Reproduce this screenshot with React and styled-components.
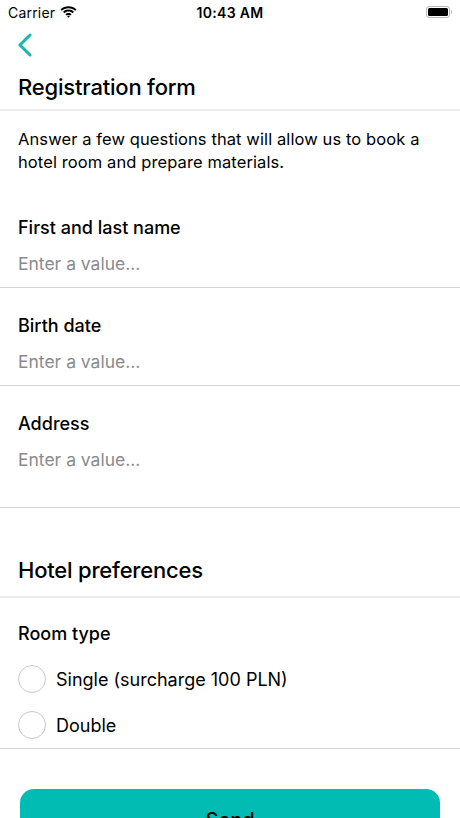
import React from 'react';
import styled, { createGlobalStyle } from 'styled-components';

const GlobalStyle = createGlobalStyle`
  body {
    margin: 0;
    background: #fff;
    font-family: Inter, "Noto Sans", "Liberation Sans", sans-serif;
    color: #000;
  }
`;

const Screen = styled.div`
  width: 460px;
  height: 818px;
  overflow: hidden;
  background: #fff;
`;

const StatusBar = styled.div`
  height: 24px;
  display: grid;
  grid-template-columns: 1fr auto 1fr;
  align-items: center;
  padding: 0 8px;
  font-size: 14px;
`;

const Carrier = styled.div`
  display: flex;
  align-items: center;
  gap: 5px;
  letter-spacing: 0.2px;
`;

const Time = styled.div`
  font-weight: 600;
  letter-spacing: 0.3px;
`;

const Battery = styled.div`
  justify-self: end;
  display: flex;
  align-items: center;
  gap: 1px;
`;

const BatteryBody = styled.div`
  width: 20px;
  height: 8px;
  border: 1.5px solid #b8b8b8;
  border-radius: 3px;
  padding: 1px;
  &::after {
    content: '';
    display: block;
    width: 100%;
    height: 100%;
    background: #000;
    border-radius: 1.5px;
  }
`;

const BatteryCap = styled.div`
  width: 1.5px;
  height: 4px;
  background: #b8b8b8;
  border-radius: 0 1px 1px 0;
`;

const NavBar = styled.div`
  height: 42px;
  display: flex;
  align-items: center;
  padding-left: 16px;
`;

const BackButton = styled.button`
  border: 0;
  background: none;
  padding: 0;
  display: flex;
  color: #13bab2;
`;

const SectionTitle = styled.h1`
  margin: 0;
  font-size: 22px;
  font-weight: 500;
  line-height: 28px;
  padding: ${p => p.$top}px 18px ${p => p.$bottom}px;
  border-bottom: 2px solid #ececec;
  letter-spacing: -0.2px;
`;

const Description = styled.p`
  margin: 0;
  padding: 17px 18px 16px;
  font-size: 16.5px;
  line-height: 23px;
  letter-spacing: 0.1px;
`;

const Field = styled.div`
  display: flex;
  flex-direction: column;
  gap: 12px;
  padding: 26px 18px ${p => (p.$tall ? 35 : 11)}px;
  border-bottom: 1px solid #d4d4d4;
`;

const Label = styled.label`
  font-size: 18px;
  line-height: 24px;
  font-weight: 500;
`;

const Input = styled.input`
  border: 0;
  outline: none;
  padding: 0;
  font: inherit;
  font-size: 17.5px;
  line-height: 24px;
  height: 24px;
  color: #000;
  &::placeholder {
    color: #8a8a8e;
  }
`;

const Choice = styled.div`
  padding: 24px 18px 0;
  border-bottom: 1px solid #d4d4d4;
`;

const ChoiceLabel = styled.div`
  font-size: 18px;
  line-height: 24px;
  font-weight: 500;
  margin-bottom: 10px;
`;

const Option = styled.div`
  height: 46px;
  display: flex;
  align-items: center;
  gap: 10px;
  font-size: 18px;
`;

const Radio = styled.span`
  width: 26px;
  height: 26px;
  border: 1.5px solid #c8c8c8;
  border-radius: 50%;
`;

const Footer = styled.div`
  padding: 40px 20px 20px;
`;

const SendButton = styled.button`
  width: 100%;
  height: 62px;
  border: 0;
  border-radius: 14px;
  background: #00bcb3;
  color: #000;
  font: inherit;
  font-size: 20px;
  font-weight: 500;
`;

const WifiIcon = () => (
  <svg width="17" height="12" viewBox="0 0 17 12">
    <path d="M8.5 2.2c2.6 0 4.9 1 6.7 2.6l1.3-1.4C14.4 1.4 11.6.2 8.5.2S2.6 1.4.5 3.4l1.3 1.4C3.6 3.2 5.9 2.2 8.5 2.2z" fill="#000" />
    <path d="M8.5 5.6c1.6 0 3 .6 4.1 1.6l1.3-1.4C12.5 4.4 10.6 3.6 8.5 3.6S4.5 4.4 3.1 5.8l1.3 1.4C5.5 6.2 6.9 5.6 8.5 5.6z" fill="#000" />
    <path d="M8.5 8.9c.7 0 1.3.3 1.8.7l1.3-1.4C10.8 7.5 9.7 7 8.5 7s-2.3.5-3.1 1.2l1.3 1.4c.5-.4 1.1-.7 1.8-.7z" fill="#000" />
    <path d="M8.5 11.8l1.4-1.5c-.4-.3-.9-.5-1.4-.5s-1 .2-1.4.5z" fill="#000" />
  </svg>
);

const fields = [
  { label: 'First and last name' },
  { label: 'Birth date' },
  { label: 'Address', tall: true },
];

const rooms = ['Single (surcharge 100 PLN)', 'Double'];

const App = () => {
  return (
    <Screen>
      <GlobalStyle />
      <StatusBar>
        <Carrier>
          Carrier
          <WifiIcon />
        </Carrier>
        <Time>10:43 AM</Time>
        <Battery>
          <BatteryBody />
          <BatteryCap />
        </Battery>
      </StatusBar>
      <NavBar>
        <BackButton aria-label="Back">
          <svg width="18" height="24" viewBox="0 0 18 24">
            <path d="M14 2L4 12l10 10" fill="none" stroke="currentColor" strokeWidth="3" strokeLinecap="round" strokeLinejoin="round" />
          </svg>
        </BackButton>
      </NavBar>
      <SectionTitle $top={7} $bottom={8}>Registration form</SectionTitle>
      <Description>
        Answer a few questions that will allow us to book a hotel room and prepare materials.
      </Description>
      {fields.map(f => (
        <Field key={f.label} $tall={f.tall}>
          <Label>{f.label}</Label>
          <Input placeholder="Enter a value..." />
        </Field>
      ))}
      <SectionTitle $top={48} $bottom={12}>Hotel preferences</SectionTitle>
      <Choice>
        <ChoiceLabel>Room type</ChoiceLabel>
        {rooms.map(r => (
          <Option key={r}>
            <Radio />
            {r}
          </Option>
        ))}
      </Choice>
      <Footer>
        <SendButton>Send</SendButton>
      </Footer>
    </Screen>
  );
};

export default App;
